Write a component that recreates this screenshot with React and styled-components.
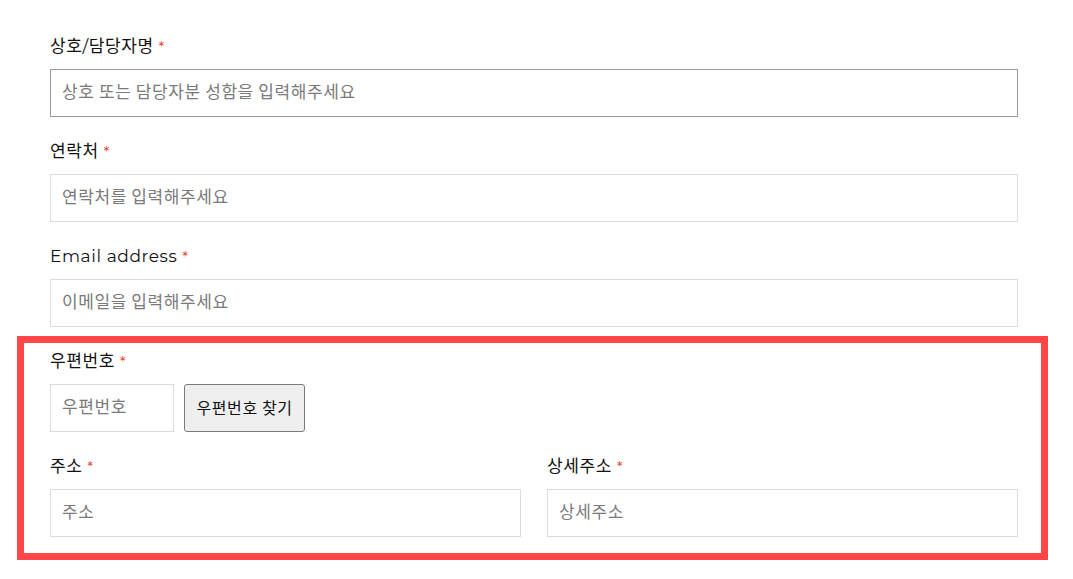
import styled, { createGlobalStyle } from 'styled-components'

const GlobalStyle = createGlobalStyle`
  html, body {
    margin: 0;
    padding: 0;
    background: #fff;
  }
  body {
    font-family: Montserrat, "DejaVu Sans", "Noto Sans CJK KR", sans-serif;
    color: #111;
  }
  * { box-sizing: border-box; }
`;

const Form = styled.form`
  display: flex;
  flex-direction: column;
  gap: 22px;
  padding: 34px 55px 0 50px;
`;

const Field = styled.div`
  display: flex;
  flex-direction: column;
  gap: 11px;
  min-width: 0;
`;

const Label = styled.label`
  font-size: 17px;
  letter-spacing: 0.6px;
  line-height: 24px;
  height: 24px;
  color: #111;
  white-space: nowrap;
`;

const Required = styled.span`
  margin-left: 5px;
  color: #e2401c;
  font-size: 14px;
`;

const Input = styled.input`
  display: block;
  width: ${({ $width }) => $width || '100%'};
  height: 48px;
  padding: 0 11px 5px;
  border: 1px solid ${({ $active }) => ($active ? '#9b9b9b' : '#dcdcdc')};
  border-radius: 0;
  background: #fff;
  font-family: "Noto Sans CJK KR", sans-serif;
  font-size: 17px;
  letter-spacing: 0.6px;
  color: #333;
  outline: none;

  &::placeholder {
    color: #7a7a7a;
  }
`;

const Highlight = styled.section`
  display: flex;
  flex-direction: column;
  gap: 22px;
  margin: -13px -30px 0 -33px;
  padding: 6px 23px 16px 26px;
  border: 7px solid #ff4545;
`;

const InlineRow = styled.div`
  display: flex;
  gap: 10px;
  align-items: stretch;
`;

const SearchButton = styled.button`
  height: 48px;
  width: 121px;
  padding: 0 0 2px;
  border: 1px solid #7a7a7a;
  border-radius: 3px;
  background: #efefef;
  font-family: "Noto Sans CJK KR", sans-serif;
  font-size: 16px;
  letter-spacing: 0.6px;
  color: #111;
  cursor: pointer;
`;

const Columns = styled.div`
  display: grid;
  grid-template-columns: 1fr 1fr;
  column-gap: 26px;
`;

const RequiredLabel = ({ children }) => (
  <Label>
    { children }
    <Required>*</Required>
  </Label>
)

const App = () => {
  return (
    <>
      <GlobalStyle />
      <Form onSubmit={ e => e.preventDefault() }>
        <Field>
          <RequiredLabel>상호/담당자명</RequiredLabel>
          <Input $active placeholder="상호 또는 담당자분 성함을 입력해주세요" />
        </Field>
        <Field>
          <RequiredLabel>연락처</RequiredLabel>
          <Input placeholder="연락처를 입력해주세요" />
        </Field>
        <Field>
          <RequiredLabel>Email address</RequiredLabel>
          <Input placeholder="이메일을 입력해주세요" />
        </Field>
        <Highlight>
          <Field>
            <RequiredLabel>우편번호</RequiredLabel>
            <InlineRow>
              <Input $width="124px" placeholder="우편번호" />
              <SearchButton type="button">우편번호 찾기</SearchButton>
            </InlineRow>
          </Field>
          <Columns>
            <Field>
              <RequiredLabel>주소</RequiredLabel>
              <Input placeholder="주소" />
            </Field>
            <Field>
              <RequiredLabel>상세주소</RequiredLabel>
              <Input placeholder="상세주소" />
            </Field>
          </Columns>
        </Highlight>
      </Form>
    </>
  )
}

export default App
